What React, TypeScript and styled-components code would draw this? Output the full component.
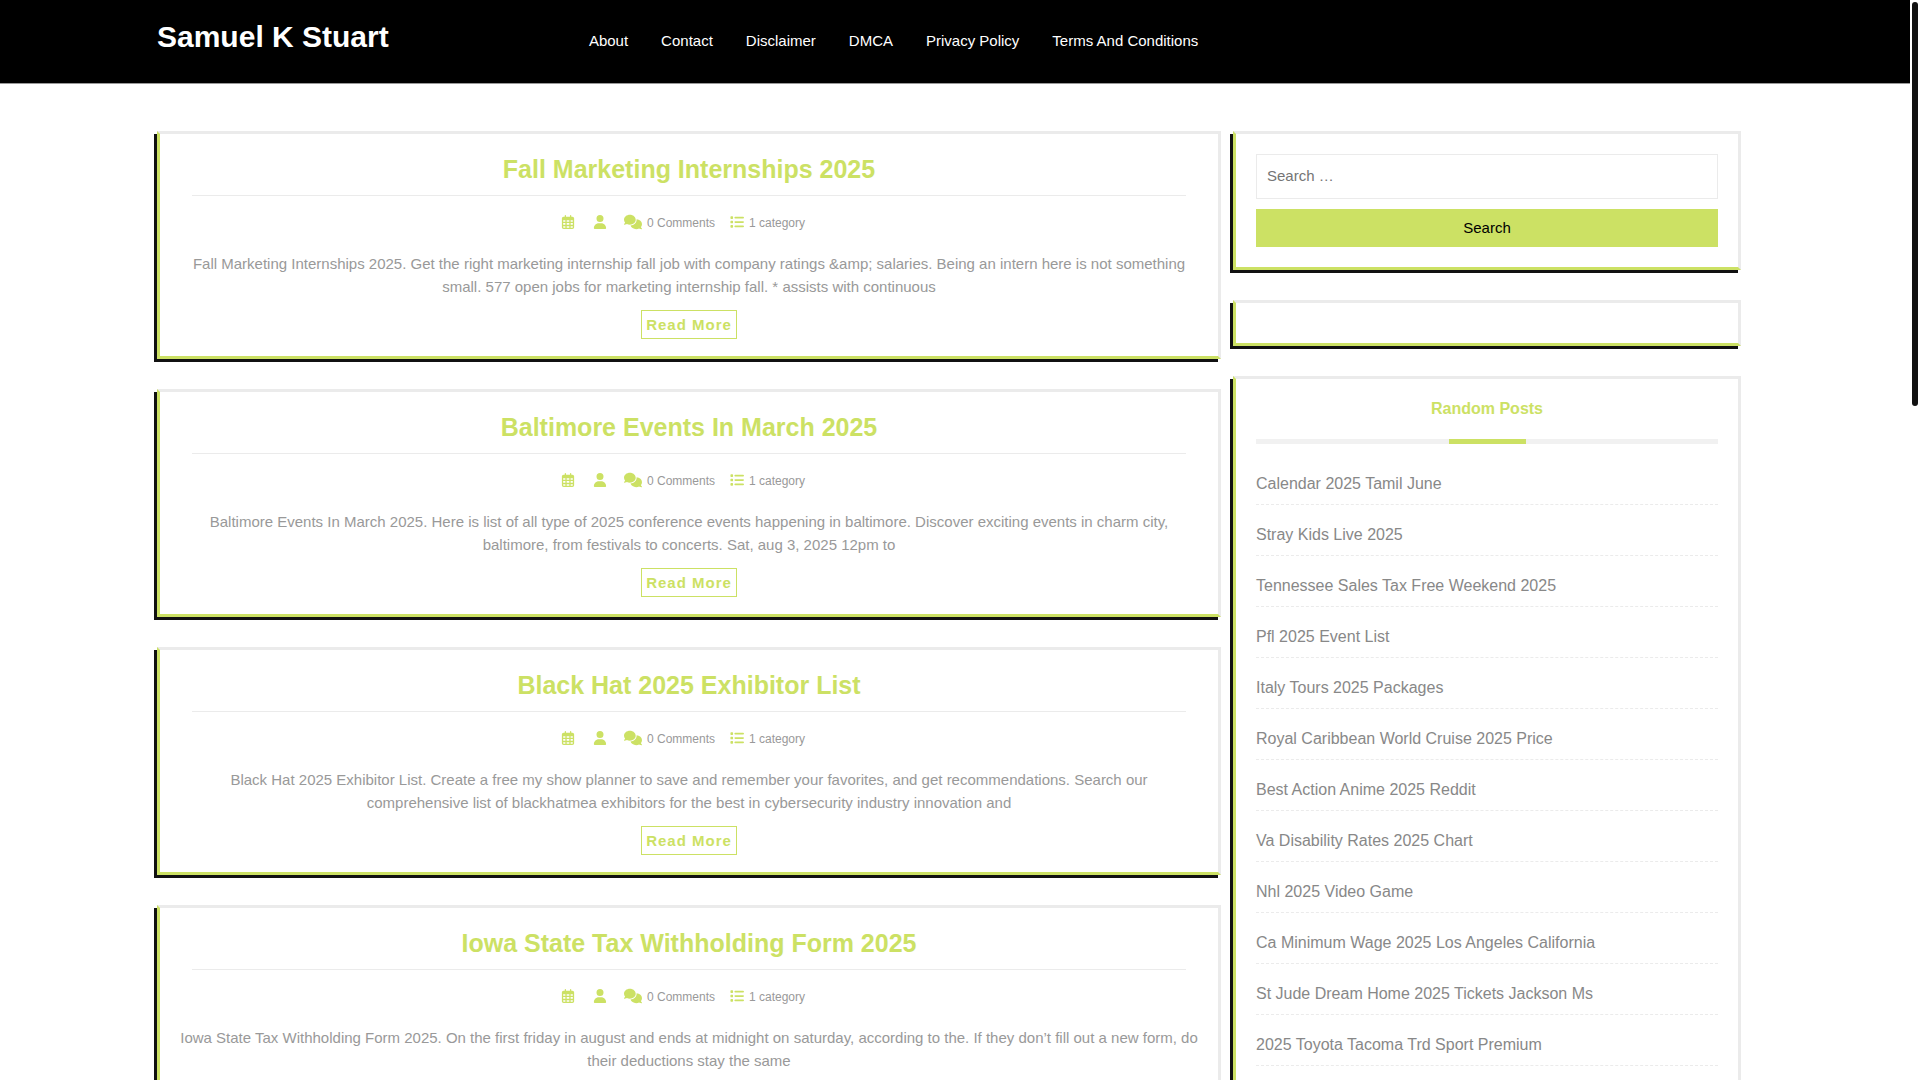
import React from "react";
import styled, { createGlobalStyle } from "styled-components";
import { FaRegCalendarDays, FaUser, FaComments, FaList } from "react-icons/fa6";

const GREEN = "#cce164";

const GlobalStyle = createGlobalStyle`
  *, *::before, *::after { box-sizing: border-box; }
  html { scrollbar-width: none; }
  body {
    margin: 0;
    padding-right: 10px;
    background: #fff;
    color: #999;
    font-family: "Liberation Sans", Arial, sans-serif;
    font-size: 15px;
    line-height: 23px;
  }
  a { color: inherit; text-decoration: none; }
`;

const Header = styled.header`
  display: flex;
  align-items: flex-start;
  height: 84px;
  padding: 0 157px;
  background: #000;
  border-bottom: 1px solid #999;
  color: #fff;
`;

const SiteTitle = styled.h1`
  flex: 0 0 27%;
  margin: 0;
  padding-top: 18px;
  font-size: 30px;
  line-height: 38px;
`;

const Nav = styled.nav`
  display: flex;
  gap: 33px;
  padding: 29px 0 0 1px;
`;

const Page = styled.div`
  display: grid;
  grid-template-columns: minmax(0, 1064fr) minmax(0, 508fr);
  gap: 12px;
  align-items: start;
  padding: 47px 169px 30px 157px;
`;

const Column = styled.div`
  display: grid;
  gap: 30px;
`;

const Panel = styled.section`
  padding: 20px;
  border: 3px solid #ebebeb;
  border-left-color: ${GREEN};
  border-bottom-color: ${GREEN};
  box-shadow: -3px 3px 0 #111;
`;

const Post = styled(Panel).attrs({ as: "article" })`
  padding: 17px 19px;
  text-align: center;
`;

const PostTitle = styled.h2`
  margin: 0 13px;
  padding-bottom: 8px;
  border-bottom: 1px solid #ebebeb;
  color: ${GREEN};
  font-size: 25px;
  line-height: 36px;
`;

const Meta = styled.div`
  display: flex;
  justify-content: center;
  align-items: center;
  height: 23px;
  margin: 16px 0 17px;
  padding-right: 12px;
  font-size: 12px;

  svg {
    margin-bottom: 4px;
    color: ${GREEN};
    font-size: 14px;
  }
`;

const MetaItem = styled.span<{ $after?: number }>`
  display: flex;
  align-items: center;
  gap: 5px;
  margin-right: ${(p) => p.$after ?? 0}px;
`;

const Excerpt = styled.p`
  margin: 0 0 12px;
`;

const ReadMore = styled.a`
  display: inline-block;
  padding: 2px 4px;
  border: 1px solid ${GREEN};
  color: ${GREEN};
  font-weight: bold;
  letter-spacing: 1px;
`;

const SearchForm = styled.form`
  display: grid;
  gap: 10px;
`;

const SearchInput = styled.input`
  width: 100%;
  height: 45px;
  padding: 0 10px 2px;
  border: 1px solid #ebebeb;
  border-radius: 0;
  font: inherit;
  &::placeholder { color: #757575; }
`;

const SearchButton = styled.button`
  height: 38px;
  padding: 0 0 2px;
  border: 0;
  background: ${GREEN};
  color: #000;
  font: inherit;
`;

const WidgetTitle = styled.h3`
  margin: 0 0 10px;
  color: ${GREEN};
  font-size: 16px;
  line-height: 20px;
  text-align: center;

  &::after {
    content: "";
    display: block;
    height: 5px;
    margin-top: 20px;
    background: linear-gradient(${GREEN}, ${GREEN}) 50% 0 / calc(100% / 6) 100% no-repeat #f1f1f1;
  }
`;

const PostList = styled.ul`
  margin: 0;
  padding: 0;
  list-style: none;
`;

const PostItem = styled.li`
  padding: 16px 0 6px;
  border-bottom: 1px dashed #ebebeb;
  color: #888;
  font-size: 16px;
  line-height: 28px;
`;

const ScrollThumb = styled.div`
  position: fixed;
  top: 2px;
  right: 2px;
  width: 6px;
  height: 404px;
  border-radius: 3px;
  background: #111;
`;

const links = ["About", "Contact", "Disclaimer", "DMCA", "Privacy Policy", "Terms And Conditions"];

const posts = [
  { title: "Fall Marketing Internships 2025", text: "Fall Marketing Internships 2025. Get the right marketing internship fall job with company ratings &amp; salaries. Being an intern here is not something small. 577 open jobs for marketing internship fall. * assists with continuous" },
  { title: "Baltimore Events In March 2025", text: "Baltimore Events In March 2025. Here is list of all type of 2025 conference events happening in baltimore. Discover exciting events in charm city, baltimore, from festivals to concerts. Sat, aug 3, 2025 12pm to" },
  { title: "Black Hat 2025 Exhibitor List", text: "Black Hat 2025 Exhibitor List. Create a free my show planner to save and remember your favorites, and get recommendations. Search our comprehensive list of blackhatmea exhibitors for the best in cybersecurity industry innovation and" },
  { title: "Iowa State Tax Withholding Form 2025", text: "Iowa State Tax Withholding Form 2025. On the first friday in august and ends at midnight on saturday, according to the. If they don’t fill out a new form, do their deductions stay the same" },
];

const randomPosts = [
  "Calendar 2025 Tamil June",
  "Stray Kids Live 2025",
  "Tennessee Sales Tax Free Weekend 2025",
  "Pfl 2025 Event List",
  "Italy Tours 2025 Packages",
  "Royal Caribbean World Cruise 2025 Price",
  "Best Action Anime 2025 Reddit",
  "Va Disability Rates 2025 Chart",
  "Nhl 2025 Video Game",
  "Ca Minimum Wage 2025 Los Angeles California",
  "St Jude Dream Home 2025 Tickets Jackson Ms",
  "2025 Toyota Tacoma Trd Sport Premium",
];

export default function App() {
  return (
    <>
      <GlobalStyle />
      <Header>
        <SiteTitle><a href="#">Samuel K Stuart</a></SiteTitle>
        <Nav>{links.map((l) => <a key={l} href="#">{l}</a>)}</Nav>
      </Header>
      <Page>
        <Column as="main">
          {posts.map((p) => (
            <Post key={p.title}>
              <PostTitle><a href="#">{p.title}</a></PostTitle>
              <Meta>
                <MetaItem $after={18}><FaRegCalendarDays /></MetaItem>
                <MetaItem $after={17}><FaUser /></MetaItem>
                <MetaItem $after={15}><FaComments size={18} />0 Comments</MetaItem>
                <MetaItem><FaList />1 category</MetaItem>
              </Meta>
              <Excerpt>{p.text}</Excerpt>
              <ReadMore href="#">Read More</ReadMore>
            </Post>
          ))}
        </Column>
        <Column as="aside">
          <Panel>
            <SearchForm role="search" onSubmit={(e) => e.preventDefault()}>
              <SearchInput type="search" aria-label="Search" placeholder="Search …" />
              <SearchButton type="submit">Search</SearchButton>
            </SearchForm>
          </Panel>
          <Panel />
          <Panel>
            <WidgetTitle>Random Posts</WidgetTitle>
            <PostList>
              {randomPosts.map((t) => <PostItem key={t}><a href="#">{t}</a></PostItem>)}
            </PostList>
          </Panel>
        </Column>
      </Page>
      <ScrollThumb />
    </>
  );
}
